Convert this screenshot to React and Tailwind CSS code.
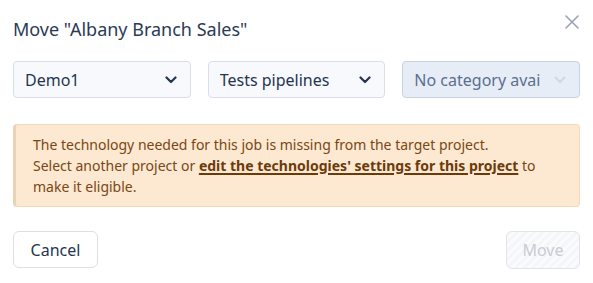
import React from 'react';

const Chevron = ({ className }) => (
  <svg className={className} width="12" height="8" viewBox="0 0 12 8" fill="none">
    <path d="M1.5 1.5L6 6l4.5-4.5" stroke="currentColor" strokeWidth="2.2" strokeLinecap="round" strokeLinejoin="round" />
  </svg>
);

const Select = ({ label, disabled }) => (
  <div
    className={
      'flex h-[37px] flex-1 items-center justify-between rounded border pl-[11px] pr-[13px] text-[16px] ' +
      (disabled
        ? 'border-[#c8d3e2] bg-[#e6edf7] text-[#5b6f8e]'
        : 'border-[#d9dee7] bg-[#f8f9fd] text-[#253550]')
    }
  >
    <span className="truncate">{label}</span>
    <Chevron className={disabled ? 'text-[#d1d9e4]' : 'text-[#253550]'} />
  </div>
);

export default function App() {
  return (
    <div className="h-[283px] w-[593px] bg-white px-[13px] pt-[17px]" style={{ fontFamily: '"Noto Sans", Lato, sans-serif' }}>
      <div className="flex items-start justify-between">
        <h1 className="text-[18px] leading-[25px] text-[#2a3a55]">Move "Albany Branch Sales"</h1>
        <svg className="mr-[1px] mt-[-2px]" width="14" height="14" viewBox="0 0 14 14">
          <path d="M1 1l12 12M13 1L1 13" stroke="#9aa3b2" strokeWidth="1.6" strokeLinecap="round" />
        </svg>
      </div>

      <div className="mt-[19px] flex gap-[17px]">
        <Select label="Demo1" />
        <Select label="Tests pipelines" />
        <Select label="No category avai" disabled />
      </div>

      <div className="mt-[26px] rounded border border-l-[3px] border-[#f4d8ba] border-l-[#ead2b4] bg-[#fde8d1] py-[9px] pl-[17px] pr-[10px] text-[14px] leading-[21px] text-[#7a4714]">
        The technology needed for this job is missing from the target project.
        <br />
        Select another project or{' '}
        <a className="font-bold text-[#6b3b0c] underline decoration-2 underline-offset-2">edit the technologies' settings for this project</a> to
        <br />
        make it eligible.
      </div>

      <div className="mt-[24px] flex justify-between">
        <button className="h-[37px] w-[85px] rounded-md border border-[#dcdfe8] bg-white text-[16px] text-[#253550]">
          Cancel
        </button>
        <button
          className="h-[38px] w-[74px] rounded-md border border-[#e1e4ea] text-[16px] text-[#c8ccd3]"
          style={{ backgroundImage: 'repeating-linear-gradient(135deg, #f5f6f9 0 3px, #fbfbfd 3px 6px)' }}
        >
          Move
        </button>
      </div>
    </div>
  );
}
